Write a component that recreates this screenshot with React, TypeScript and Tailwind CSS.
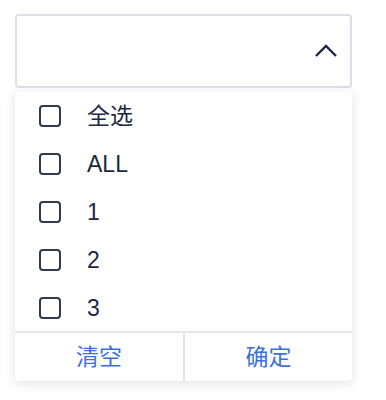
import React, { useState } from 'react'

const options = ['全选', 'ALL', '1', '2', '3']

function App() {
  const [checked, setChecked] = useState<string[]>([])

  const toggle = (v: string) => {
    setChecked(checked.includes(v) ? checked.filter((c) => c !== v) : [...checked, v])
  }

  return (
    <div
      className="w-[386px] h-[400px] bg-white pl-[15px] pt-[14px]"
      style={{ fontFamily: '"Liberation Sans", "Noto Sans CJK SC", sans-serif' }}
    >
      <div className="w-[337px] h-[74px] border-2 border-[#dcdfe6] rounded-[4px] flex items-center justify-end pr-[12px]">
        <svg width="24" height="14" viewBox="0 0 24 14" fill="none">
          <path d="M2 12L12 2L22 12" stroke="#1c2748" strokeWidth="2.4" />
        </svg>
      </div>

      <div className="mt-[4px] w-[337px] bg-white rounded-[4px] shadow-[0_2px_12px_rgba(0,0,0,0.12)]">
        <div className="h-[239px] overflow-hidden">
          {options.map((o) => (
            <label key={o} className="h-[48px] flex items-center pl-[24px] cursor-pointer">
              <span
                onClick={() => toggle(o)}
                className="w-[22px] h-[22px] border-2 border-[#2d3a4f] rounded-[4px] shrink-0"
              />
              <span className="ml-[26px] text-[23px] text-[#1c2744]">{o}</span>
            </label>
          ))}
        </div>
        <div className="h-[50px] border-t-2 border-[#e4e7ed] flex">
          <button className="w-[168px] text-[23px] text-[#3a70dc]" onClick={() => setChecked([])}>
            清空
          </button>
          <button className="flex-1 border-l-2 border-[#e0e3ea] text-[23px] text-[#3a70dc]">确定</button>
        </div>
      </div>
    </div>
  )
}

export default App
